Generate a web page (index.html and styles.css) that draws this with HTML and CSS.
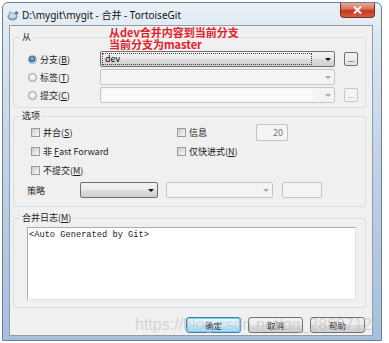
FILE: index.html
```html
<!DOCTYPE html>
<html lang="zh-CN">
<head>
    <meta charset="UTF-8">
    <meta name="viewport" content="width=device-width, initial-scale=1.0">
    <title>合并 - TortoiseGit</title>
    <link rel="stylesheet" href="styles.css">
</head>
<body>
    <div class="window">
        <div class="titlebar">
            <svg class="appicon" width="12" height="11" viewBox="0 0 12 11">
                <ellipse cx="5.5" cy="6.5" rx="5" ry="4" fill="#8299b5"/>
                <ellipse cx="5.5" cy="5.8" rx="3.4" ry="2.6" fill="#cdd9e6"/>
                <circle cx="9.6" cy="3" r="1.8" fill="#5f7ea3"/>
                <circle cx="3" cy="2.4" r="1.1" fill="#9fb3c9"/>
            </svg>
            <span class="title">D:\mygit\mygit - 合并 - TortoiseGit</span>
            <span class="close">
                <svg width="9" height="8" viewBox="0 0 9 8">
                    <path d="M1 0.5 L8 7.5 M8 0.5 L1 7.5" stroke="#fff" stroke-width="2"/>
                </svg>
            </span>
        </div>
        <div class="client">
            <fieldset class="group group-from">
                <legend>从</legend>
                <div class="body">
                    <div class="refrow">
                        <span class="opt"><i class="radio on"></i>分支(<u>B</u>)</span>
                        <div class="combo"><span class="val">dev</span><i class="arrow"></i></div>
                        <span class="dots">...</span>
                    </div>
                    <div class="refrow">
                        <span class="opt"><i class="radio"></i>标签(<u>T</u>)</span>
                        <div class="combo off"><i class="arrow"></i></div>
                    </div>
                    <div class="refrow">
                        <span class="opt"><i class="radio"></i>提交(<u>C</u>)</span>
                        <div class="combo off edit"><span class="editbox"></span><i class="arrow"></i></div>
                        <span class="dots off">...</span>
                    </div>
                </div>
            </fieldset>

            <fieldset class="group group-opts">
                <legend>选项</legend>
                <div class="body">
                    <div class="optrow">
                        <span class="chk col1"><i class="box"></i>并合(<u>S</u>)</span>
                        <span class="chk col2"><i class="box"></i>信息</span>
                        <span class="field num">20</span>
                    </div>
                    <div class="optrow">
                        <span class="chk col1"><i class="box"></i>非&nbsp;<u>F</u>ast Forward</span>
                        <span class="chk col2"><i class="box"></i>仅快进式(<u>N</u>)</span>
                    </div>
                    <div class="optrow">
                        <span class="chk col1"><i class="box"></i>不提交(<u>M</u>)</span>
                    </div>
                    <div class="strategy">
                        <span class="strat-label">策略</span>
                        <div class="combo small s1"><i class="arrow"></i></div>
                        <div class="combo off small s2"><i class="arrow"></i></div>
                        <span class="field s3"></span>
                    </div>
                </div>
            </fieldset>

            <fieldset class="group group-log">
                <legend>合并日志(<u>M</u>)</legend>
                <div class="body">
                    <div class="log">&lt;Auto Generated by Git&gt;</div>
                </div>
            </fieldset>

            <div class="buttons">
                <span class="btn default">确定</span>
                <span class="btn">取消</span>
                <span class="btn">帮助</span>
            </div>
        </div>

        <!-- 截图上的标注和水印 -->
        <div class="note">从dev合并内容到当前分支<br>当前分支为master</div>
        <div class="watermark">https://blog.csdn.net/qq_28837127</div>
    </div>
</body>
</html>
```

FILE: styles.css
```css
*{
    margin: 0;
    padding: 0;
    box-sizing: border-box;
}
body{
    background: #fff;
    font-family: "Noto Sans CJK SC", "Noto Sans", sans-serif;
    font-size: 9px;
    color: #1a1a1a;
}
u{
    text-decoration: underline;
}
.window{
    position: relative;
    width: 380px;
    height: 339px;
    margin: 2px 0 0 2px;
    padding: 0 8px 4px 6px;
    border: 1px solid #6b7f95;
    border-radius: 6px 6px 0 0;
    background: linear-gradient(to bottom, #eaf0f6 0%, #d8e3ee 15%, #bccfe4 55%, #a4bfde 100%);
    display: flex;
    flex-direction: column;
}
.titlebar{
    height: 22px;
    display: flex;
    align-items: center;
}
.appicon{
    flex: none;
    margin: 3px 3px 0 -2px;
}
.title{
    font-family: "Noto Sans", "Noto Sans CJK SC", sans-serif;
    font-size: 10px;
    color: #111;
}
.close{
    flex: none;
    align-self: flex-start;
    margin-left: auto;
    margin-right: -2px;
    width: 35px;
    height: 15px;
    border: 1px solid #7a2f26;
    border-top: none;
    border-radius: 0 0 4px 4px;
    background: linear-gradient(#eaa99a, #d96a52 45%, #c3361f 55%, #d55d43);
    display: flex;
    align-items: center;
    justify-content: center;
}

.client{
    flex: 1;
    background: #f0f0f0;
    border: 1px solid #8e9cad;
    padding: 0 6px 0 3px;
    display: flex;
    flex-direction: column;
}
.group{
    border: 1px solid #d5dfe5;
    border-radius: 3px;
    min-width: 0;
}
.group legend{
    margin-left: 6px;
    padding: 0 2px;
    line-height: 14px;
    color: #222;
}

/* 从 */
.group-from{
    margin-top: 4px;
}
.group-from .body{
    padding: 7px 7px 4px 14px;
}
.refrow{
    display: flex;
    align-items: center;
    height: 16px;
}
.refrow + .refrow{
    margin-top: 2px;
}
.opt{
    flex: none;
    width: 72px;
    display: flex;
    align-items: center;
}
.radio{
    flex: none;
    width: 9px;
    height: 9px;
    margin-right: 3px;
    border: 1px solid #9a9a9a;
    border-radius: 50%;
    background: radial-gradient(circle at 50% 40%, #fff 0, #e6e6e6 60%, #cfcfcf 100%);
}
.radio.on{
    background: radial-gradient(circle at 45% 40%, #a9d4f2 0, #3d86c6 35%, #1f5a99 55%, #e3e3e3 62%, #d0d0d0 100%);
}
.combo{
    flex: none;
    width: 235px;
    height: 16px;
    border: 1px solid #707070;
    border-radius: 2px;
    background: linear-gradient(#f3f3f3 0, #ebebeb 50%, #dedede 50%, #d0d0d0 100%);
    display: flex;
    align-items: center;
}
.combo .val{
    flex: 1;
    height: 12px;
    margin: 0 13px 0 1px;
    padding-left: 2px;
    border: 1px dotted #444;
    line-height: 10px;
    color: #000;
}
.arrow{
    flex: none;
    margin-left: auto;
    margin-right: 3px;
    border-left: 3px solid transparent;
    border-right: 3px solid transparent;
    border-top: 3px solid #111;
}
.combo.off{
    border-color: #c6c6c6;
    background: #f4f4f4;
}
.combo.off .arrow{
    border-top-color: #a8a8a8;
}
.combo.edit .editbox{
    flex: 1;
    height: 12px;
    margin: 0 12px 0 2px;
    background: #fafafa;
}
.dots{
    flex: none;
    width: 14px;
    height: 14px;
    margin-left: 9px;
    border: 1px solid #707070;
    border-radius: 2px;
    background: linear-gradient(#f4f4f4, #e2e2e2);
    font-size: 8px;
    line-height: 12px;
    text-align: center;
}
.dots.off{
    border-color: #c6c6c6;
    background: #f4f4f4;
    color: #a0a0a0;
}

/* 选项 */
.group-opts{
    margin-top: 1px;
}
.group-opts .body{
    padding: 0 8px 8px 0;
}
.optrow{
    display: flex;
    align-items: center;
    height: 19px;
    padding-left: 17px;
}
.chk{
    flex: none;
    display: flex;
    align-items: center;
}
.col1{
    width: 146px;
}
.col2{
    width: 79px;
}
.box{
    flex: none;
    width: 9px;
    height: 9px;
    margin-right: 3px;
    border: 1px solid #9a9a9a;
    background: linear-gradient(135deg, #c9c9c9, #ececec 70%, #f7f7f7);
}
.field{
    flex: none;
    height: 16px;
    border: 1px solid #c3c3c3;
    border-radius: 2px;
    background: #f4f4f4;
}
.field.num{
    width: 32px;
    height: 17px;
    padding-right: 4px;
    text-align: right;
    line-height: 15px;
    color: #777;
}
.strategy{
    display: flex;
    align-items: center;
    height: 16px;
    margin-top: 2px;
    padding-left: 13px;
}
.strat-label{
    flex: none;
    width: 53px;
}
.combo.small{
    height: 16px;
}
.s1{
    width: 78px;
    margin-right: 8px;
}
.s2{
    width: 107px;
    margin-right: 9px;
}
.s3{
    width: 40px;
}

/* 合并日志 */
.group-log{
    margin-top: 4px;
}
.group-log .body{
    padding: 2px 9px 7px 13px;
}
.log{
    height: 73px;
    border: 1px solid #abadb3;
    border-right-color: #e3e3e3;
    border-bottom-color: #e3e3e3;
    background: #fff;
    padding: 2px 1px;
    font-family: "Liberation Mono", monospace;
    font-size: 8.7px;
    line-height: 11px;
    color: #222;
}

.buttons{
    display: flex;
    justify-content: flex-end;
    gap: 7px;
    margin: 9px 1px 0 0;
}
.btn{
    width: 55px;
    height: 16px;
    border: 1px solid #707070;
    border-radius: 3px;
    background: linear-gradient(#f3f3f3, #ebebeb 50%, #dddddd 50%, #cfcfcf);
    display: flex;
    align-items: center;
    justify-content: center;
    font-size: 8.5px;
}
.btn.default{
    border-color: #3c7fb1;
    background: linear-gradient(#ecf7fd, #dbf1fc 50%, #c0e7fc 50%, #a9dbf6);
    box-shadow: inset 0 0 0 1px #7ecbf1;
}

.note{
    position: absolute;
    left: 106px;
    top: 24px;
    font-family: "Noto Sans CJK SC", sans-serif;
    font-size: 11px;
    font-weight: bold;
    line-height: 11.5px;
    color: #e3202a;
}
.watermark{
    position: absolute;
    left: 132px;
    top: 312px;
    font-family: "Liberation Sans", sans-serif;
    font-size: 16px;
    line-height: 20px;
    color: rgba(190, 190, 190, 0.6);
    white-space: nowrap;
}
```
